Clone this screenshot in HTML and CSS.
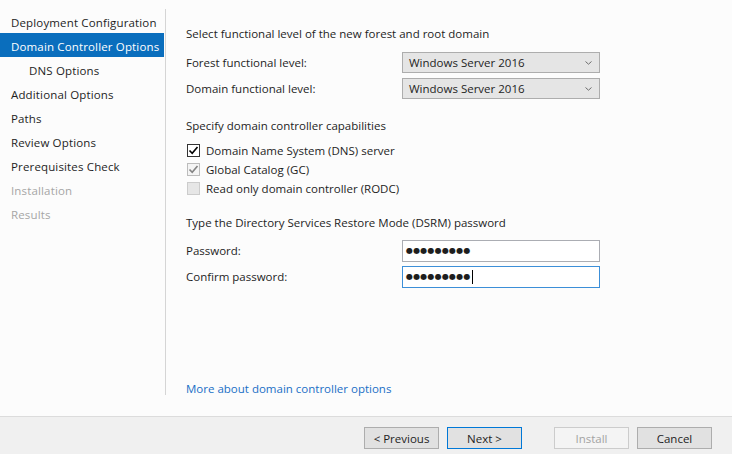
FILE: index.html
```html
<!DOCTYPE html>
<html>
<head>
<meta charset="utf-8">
<link rel="stylesheet" href="styles.css">
</head>
<body>
<div class="main">
  <nav class="nav">
    <div class="nav-item">Deployment Configuration</div>
    <div class="nav-item selected">Domain Controller Options</div>
    <div class="nav-item sub">DNS Options</div>
    <div class="nav-item">Additional Options</div>
    <div class="nav-item">Paths</div>
    <div class="nav-item">Review Options</div>
    <div class="nav-item">Prerequisites Check</div>
    <div class="nav-item disabled">Installation</div>
    <div class="nav-item disabled">Results</div>
  </nav>
  <section class="content">
    <div class="heading h1">Select functional level of the new forest and root domain</div>
    <div class="field-row first">
      <div class="label">Forest functional level:</div>
      <div class="combo"><span>Windows Server 2016</span><svg class="chev" width="7" height="4" viewBox="0 0 7 4"><path d="M0.5 0.5 L3.5 3.2 L6.5 0.5" fill="none" stroke="#6d6d6d" stroke-width="1"/></svg></div>
    </div>
    <div class="field-row">
      <div class="label">Domain functional level:</div>
      <div class="combo"><span>Windows Server 2016</span><svg class="chev" width="7" height="4" viewBox="0 0 7 4"><path d="M0.5 0.5 L3.5 3.2 L6.5 0.5" fill="none" stroke="#6d6d6d" stroke-width="1"/></svg></div>
    </div>

    <div class="heading h2">Specify domain controller capabilities</div>
    <div class="checks">
      <div class="check-row">
        <span class="box on"><svg width="11" height="11" viewBox="0 0 11 11"><path d="M1.5 5.5 L4.2 8.3 L9.5 2" fill="none" stroke="#000" stroke-width="1.6"/></svg></span>
        <span>Domain Name System (DNS) server</span>
      </div>
      <div class="check-row">
        <span class="box dis-on"><svg width="11" height="11" viewBox="0 0 11 11"><path d="M1.5 5.5 L4.2 8.3 L9.5 2" fill="none" stroke="#838383" stroke-width="1.6"/></svg></span>
        <span>Global Catalog (GC)</span>
      </div>
      <div class="check-row">
        <span class="box dis-off"></span>
        <span>Read only domain controller (RODC)</span>
      </div>
    </div>

    <div class="heading h3">Type the Directory Services Restore Mode (DSRM) password</div>
    <div class="field-row pw-first">
      <div class="label">Password:</div>
      <div class="textbox"><span class="dots">●●●●●●●●●</span></div>
    </div>
    <div class="field-row">
      <div class="label">Confirm password:</div>
      <div class="textbox focused"><span class="dots">●●●●●●●●●</span><span class="caret"></span></div>
    </div>

    <div class="spacer"></div>
    <a class="link" href="#">More about domain controller options</a>
  </section>
</div>
<footer class="footer">
  <button class="btn">&lt; Previous</button>
  <button class="btn default">Next &gt;</button>
  <button class="btn disabled install">Install</button>
  <button class="btn">Cancel</button>
</footer>
</body>
</html>
```

FILE: styles.css
```css
* { box-sizing: border-box; }
html, body { margin: 0; padding: 0; }
body {
  width: 732px;
  height: 454px;
  background: #fcfcfc;
  font-family: "Open Sans", "Noto Sans", sans-serif;
  font-size: 11.5px;
  color: #1e1e1e;
  overflow: hidden;
  display: flex;
  flex-direction: column;
}
.main {
  height: 416px;
  display: flex;
}
.nav {
  width: 166px;
  margin-top: 9px;
  margin-bottom: 21px;
  border-right: 1px solid #d5d5d5;
  display: flex;
  flex-direction: column;
}
.nav-item {
  height: 24px;
  line-height: 20px;
  padding-top: 4px;
  padding-left: 11px;
  white-space: nowrap;
  letter-spacing: 0.15px;
  color: #1e1e1e;
}
.nav-item.selected {
  background: #0a6ebd;
  color: #ffffff;
  margin-right: 1px;
}
.nav-item.sub { padding-left: 29px; }
.nav-item.disabled { color: #a6a6a6; }

.content {
  flex: 1;
  padding-left: 20px;
  padding-top: 26px;
  display: flex;
  flex-direction: column;
}
.heading { height: 16px; line-height: 16px; }
.h2 { margin-top: 19px; }
.h3 { margin-top: 17px; }
.field-row {
  display: flex;
  align-items: center;
  height: 21px;
  margin-top: 5px;
}
.field-row.first { margin-top: 10px; }
.field-row.pw-first { margin-top: 9px; }
.label { width: 216px; }
.combo {
  width: 198px;
  height: 21px;
  border: 1px solid #adadad;
  background: #e5e5e5;
  display: flex;
  align-items: center;
  justify-content: space-between;
  padding: 0 7px 0 6px;
}
.chev { display: block; margin-top: 1px; }
.textbox {
  width: 198px;
  height: 22px;
  border: 1px solid #abadb3;
  background: #ffffff;
  display: flex;
  align-items: center;
  padding-left: 3px;
}
.textbox.focused { border-color: #3c8fd8; }
.dots {
  font-family: "DejaVu Sans", sans-serif;
  font-size: 8px;
  letter-spacing: 0.2px;
  color: #1e1e1e;
}
.caret {
  display: inline-block;
  width: 1px;
  height: 14px;
  background: #000;
  margin-left: 1px;
}
.checks {
  margin-top: 7px;
  display: flex;
  flex-direction: column;
}
.check-row {
  height: 19px;
  display: flex;
  align-items: center;
}
.box {
  width: 13px;
  height: 13px;
  margin-left: 1px;
  margin-right: 6px;
  border: 1px solid #333333;
  background: #ffffff;
  display: flex;
  align-items: center;
  justify-content: center;
}
.box svg { display: block; }
.box.dis-on { border-color: #bcbcbc; background: #f4f4f4; }
.box.dis-off { border-color: #cccccc; background: #e6e6e6; }
.spacer { flex: 1; }
.link {
  color: #1a6fc6;
  text-decoration: none;
  height: 16px;
  line-height: 16px;
  margin-bottom: 19px;
}
.footer {
  height: 38px;
  border-top: 1px solid #dcdcdc;
  background: #f0f0f0;
  display: flex;
  justify-content: flex-end;
  align-items: flex-start;
  padding-top: 10px;
  padding-right: 20px;
}
.btn {
  width: 75px;
  height: 22px;
  border: 1px solid #adadad;
  background: #e1e1e1;
  font-family: "Open Sans", "Noto Sans", sans-serif;
  font-size: 11.5px;
  color: #1e1e1e;
  margin-left: 8px;
  padding: 0;
}
.btn.default { border-color: #0078d7; }
.btn.disabled { color: #a3a3a3; border-color: #cccccc; background: #f4f4f4; }
.btn.install { margin-left: 32px; }
```
